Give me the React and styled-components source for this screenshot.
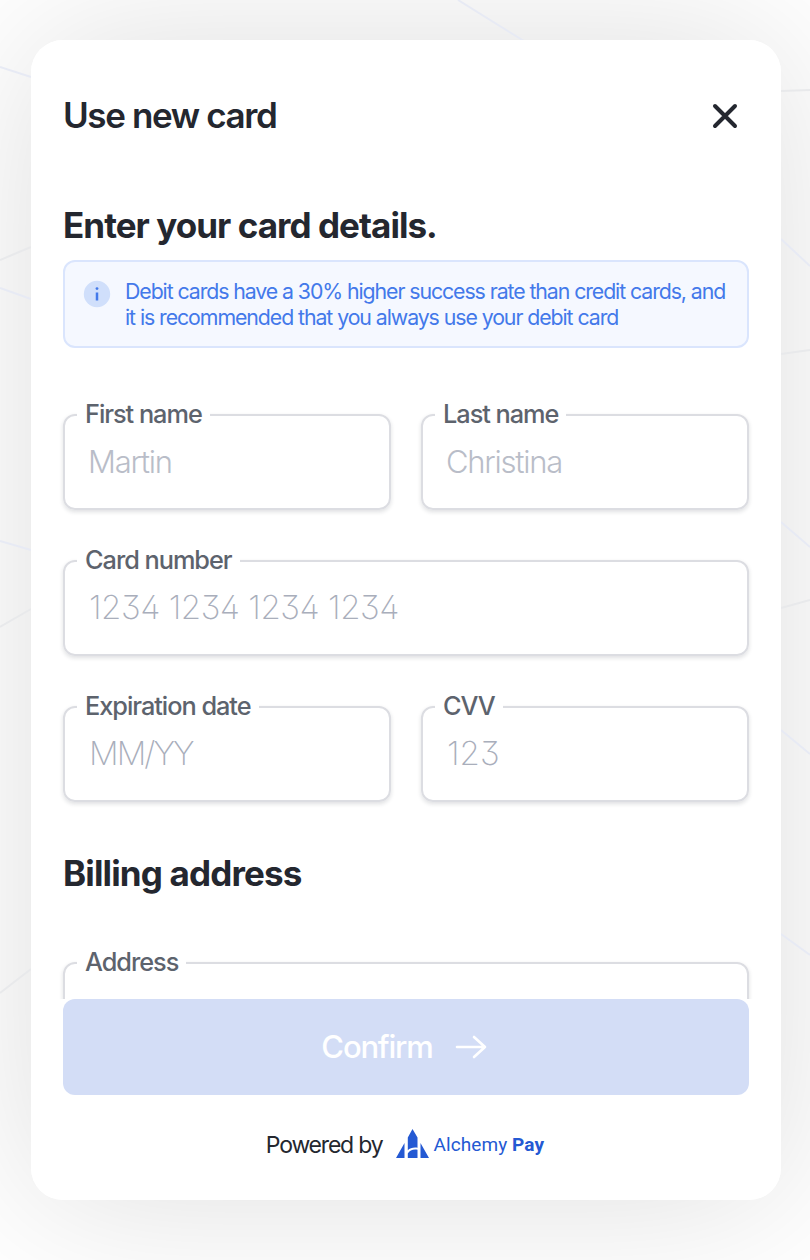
import React from "react";
import styled, { createGlobalStyle } from "styled-components";

const GlobalStyle = createGlobalStyle`
  * { box-sizing: border-box; }
  body {
    margin: 0;
    background: #fff;
    font-family: Inter, "Liberation Sans", sans-serif;
    color: #24272f;
  }
`;

const Page = styled.main`
  position: relative;
  width: 810px;
  height: 1260px;
  padding: 40px 29px 60px 31px;
  overflow: hidden;
`;

const Backdrop = styled.svg`
  position: absolute;
  inset: 0;
  fill: none;
  stroke-width: 2;
`;

const Card = styled.section`
  position: relative;
  display: flex;
  flex-direction: column;
  height: 1160px;
  padding: 0 32px;
  border-radius: 32px;
  background: #fff;
`;

const Glow = styled.div`
  position: absolute;
  inset: 40px 29px 60px 31px;
  border-radius: 32px;
  box-shadow: 0 0 160px rgba(0, 0, 0, 0.135);
`;

const Header = styled.header`
  display: flex;
  align-items: center;
  justify-content: space-between;
  flex: none;
  height: 152px;
  padding-right: 10px;
`;

const Title = styled.h1`
  margin: 0;
  padding-bottom: 2px;
  font-size: 35px;
  line-height: 42px;
  font-weight: 600;
  letter-spacing: -1.38px;
`;

const CloseButton = styled.button`
  display: flex;
  padding: 0;
  border: 0;
  background: none;
  color: #24272f;
`;

const Form = styled.form`
  flex: none;
  height: 807px;
  margin: 0 -8px;
  padding: 0 8px;
  overflow: hidden;
`;

const Heading = styled.h2`
  margin: ${(p) => p.$top}px 0 ${(p) => p.$bottom}px;
  padding-bottom: 2px;
  font-size: 35px;
  line-height: 42px;
  font-weight: 700;
  letter-spacing: ${(p) => p.$track}px;
`;

const Notice = styled.div`
  display: flex;
  gap: 15px;
  height: 88px;
  margin-bottom: 52px;
  padding: 17px 0 0 19px;
  border: 2px solid #dae5fd;
  border-radius: 12px;
  background: #f5f8ff;
  color: #4379ea;
`;

const InfoIcon = styled.svg`
  flex: none;
  overflow: visible;
`;

const NoticeText = styled.p`
  margin: -1px 0 0;
  font-size: 21.3px;
  line-height: 26px;
  white-space: nowrap;
`;

const Line = styled.span`
  display: block;
  letter-spacing: ${(p) => p.$track}px;
`;

const Fields = styled.div`
  display: grid;
  grid-template-columns: 1fr 1fr;
  gap: 36px 30px;
`;

const FieldBox = styled.fieldset`
  grid-column: ${(p) => (p.$wide ? "1 / -1" : "auto")};
  min-width: 0;
  height: 110px;
  margin: 0;
  padding: 0 24px 0 12px;
  border: 2px solid #dcdde2;
  border-radius: 12px;
  box-shadow: 0 2px 4px rgba(30, 32, 50, 0.14);
`;

const Legend = styled.legend`
  padding: 0 8px 2px;
  font-size: 25.3px;
  line-height: 28px;
  font-weight: 500;
  letter-spacing: ${(p) => p.$track}px;
  color: #5d636d;
  background: #fff;
`;

const Input = styled.input`
  display: block;
  width: 100%;
  height: 64px;
  padding: 0 0 2px ${(p) => (p.$numeric ? 12 : 11)}px;
  border: 0;
  outline: 0;
  background: transparent;
  font-family: Inter, "Liberation Sans", sans-serif;
  font-size: ${(p) => (p.$numeric ? 33 : 31)}px;
  font-weight: ${(p) => (p.$numeric ? 200 : 300)};
  font-feature-settings: "ss01", "cv02";
  letter-spacing: ${(p) => p.$track}px;
  &::placeholder { color: ${(p) => (p.$numeric ? "#a9aebb" : "#b9bdc8")}; opacity: 1; }
`;

const Confirm = styled.button`
  display: flex;
  flex: none;
  align-items: center;
  justify-content: center;
  gap: 22px;
  height: 96px;
  padding: 0 4px 0 0;
  border: 0;
  border-radius: 12px;
  background: #d3ddf6;
  color: #fff;
  font: 500 31px Inter, "Liberation Sans", sans-serif;
  letter-spacing: -1.2px;
`;

const ConfirmLabel = styled.span`
  padding-bottom: 2px;
`;

const Footer = styled.footer`
  display: flex;
  align-items: center;
  justify-content: center;
  height: 100px;
  padding-right: 2px;
  font-size: 23px;
  letter-spacing: -1.2px;
`;

const Logo = styled.svg`
  margin: -2px 4px 0 14px;
  fill: #2459d3;
`;

const Brand = styled.span`
  padding-bottom: 1px;
  font: 400 19px Roboto, sans-serif;
  letter-spacing: 0.1px;
  color: #2459d3;
  b { font-weight: 700; }
`;

function Field({ label, placeholder, wide, numeric, track = -1.25 }) {
  return (
    <FieldBox $wide={wide}>
      <Legend $track={-1.02}>{label}</Legend>
      <Input placeholder={placeholder} aria-label={label} $numeric={numeric} $track={track} />
    </FieldBox>
  );
}

export default function App() {
  return (
    <Page>
      <GlobalStyle />
      <Glow />
      <Backdrop width="810" height="1260">
        <path stroke="#e7eaf4" d="M458 0 524 41M0 67l31 10M0 288l31 11M0 541l31 9M781 239l29 27M781 522l29 25M781 730l29 24M781 934l29 21" />
        <path stroke="#e8e9eb" d="M0 260l31-13M0 627l31-18M0 993l31-24M781 91l29-1M781 354l29-4M781 608l29-8" />
      </Backdrop>
      <Card>
        <Header>
          <Title>Use new card</Title>
          <CloseButton aria-label="Close">
            <svg width="28" height="28" fill="none" stroke="currentColor" strokeWidth="4" strokeLinecap="round">
              <path d="M4 4 24 24M24 4 4 24" />
            </svg>
          </CloseButton>
        </Header>
        <Form>
          <Heading $top={12} $bottom={12} $track={-0.95}>Enter your card details.</Heading>
          <Notice>
            <InfoIcon width="26" height="32" fill="none">
              <circle cx="13" cy="15" r="13.2" fill="#d0dffb" />
              <path d="M13 13.500v8" stroke="#4379ea" strokeWidth="2.5" />
              <circle cx="13" cy="9.600" r="1.4" fill="#4379ea" />
            </InfoIcon>
            <NoticeText>
              <Line $track={-1.08}>Debit cards have a 30% higher success rate than credit cards, and</Line>
              <Line $track={-1.07}>it is recommended that you always use your debit card</Line>
            </NoticeText>
          </Notice>
          <Fields>
            <Field label="First name" placeholder="Martin" />
            <Field label="Last name" placeholder="Christina" />
            <Field label="Card number" placeholder="1234 1234 1234 1234" wide numeric track={-0.47} />
            <Field label="Expiration date" placeholder="MM/YY" numeric track={-1.95} />
            <Field label="CVV" placeholder="123" numeric track={0} />
          </Fields>
          <Heading $top={50} $bottom={52} $track={-0.85}>Billing address</Heading>
          <Fields>
            <Field label="Address" placeholder="" wide />
          </Fields>
        </Form>
        <Confirm>
          <ConfirmLabel>Confirm</ConfirmLabel>
          <svg width="32" height="24" fill="none" stroke="#fff" strokeWidth="2.6" strokeLinecap="round" strokeLinejoin="round">
            <path d="M2 12h28M19 2l11 10-11 10" />
          </svg>
        </Confirm>
        <Footer>
          Powered by
          <Logo width="33" height="30" viewBox="0 0 33 30">
            <path d="M16.500 0 21.500 8.500v10.300c-4-.8-7.500.5-9.700 2.400V8.500zM0 29 8.500 14v15zM11.800 29v-4.500c1.800-3.200 5.700-4.500 9.700-3.700V29zM24.500 14 33 29h-8.500z" />
          </Logo>
          <Brand>Alchemy <b>Pay</b></Brand>
        </Footer>
      </Card>
    </Page>
  );
}
